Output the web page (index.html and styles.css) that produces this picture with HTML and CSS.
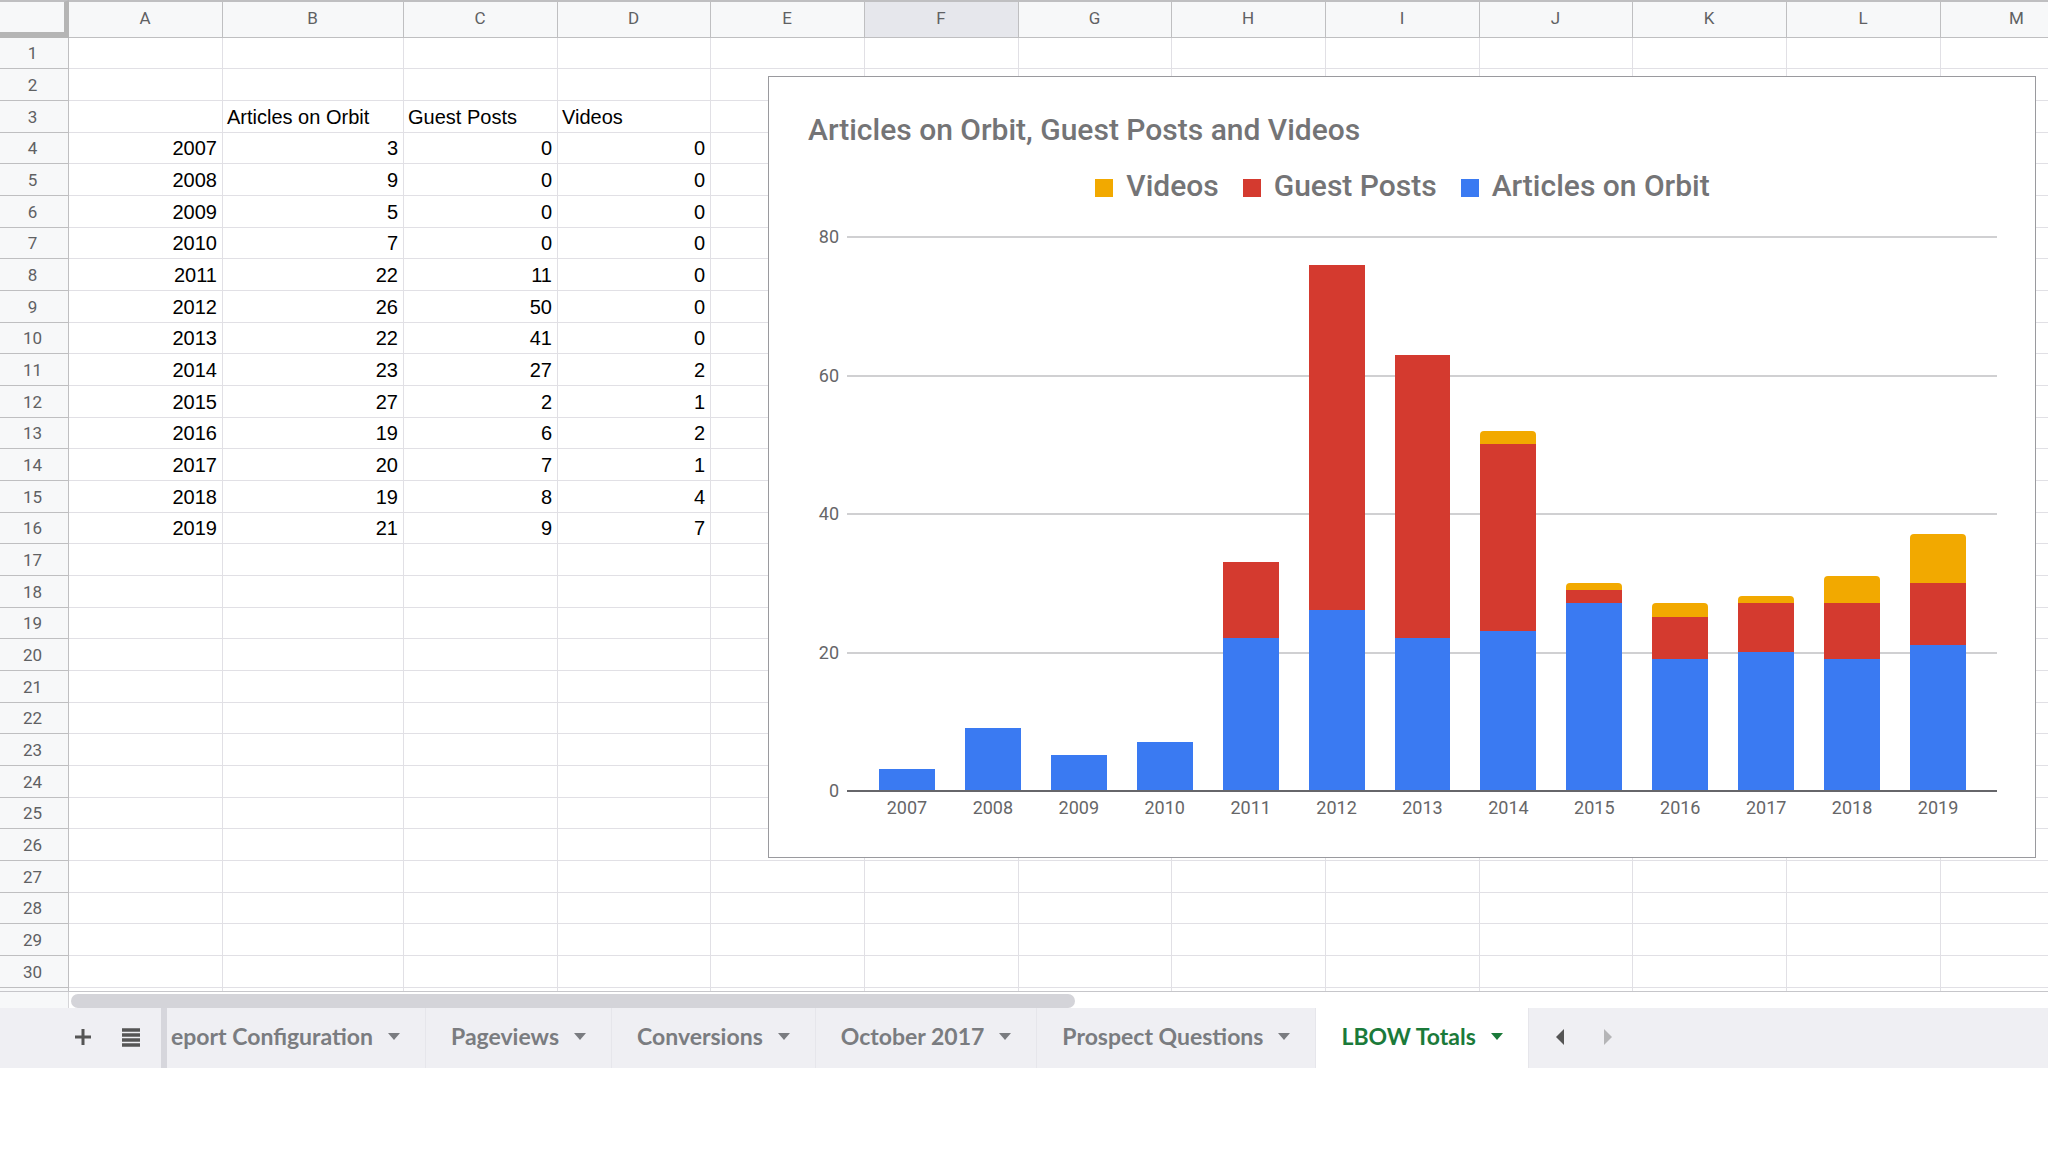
FILE: index.html
```
<!DOCTYPE html>
<html lang="en">
<head>
    <meta charset="UTF-8">
    <meta name="viewport" content="width=device-width, initial-scale=1.0">
    <title>LBOW Totals</title>
    <link rel="stylesheet" href="styles.css">
</head>
<body>
    <main class="sheet">
        <table class="grid">
            <colgroup id="cols"></colgroup>
            <thead><tr id="letters"></tr></thead>
            <tbody id="rows"></tbody>
        </table>
        <section class="chart">
            <h1 class="chart-title">Articles on Orbit, Guest Posts and Videos</h1>
            <ul class="legend">
                <li class="legend-item"><span class="swatch videos"></span>Videos</li>
                <li class="legend-item"><span class="swatch guest"></span>Guest Posts</li>
                <li class="legend-item"><span class="swatch articles"></span>Articles on Orbit</li>
            </ul>
            <div class="plot">
                <div class="axis">
                    <div class="tick">80</div>
                    <div class="tick">60</div>
                    <div class="tick">40</div>
                    <div class="tick">20</div>
                    <div class="tick zero">0</div>
                </div>
                <div class="bars" id="bars"></div>
            </div>
            <div class="years" id="years"></div>
        </section>
    </main>
    <div class="scroll-row">
        <div class="scroll-corner"></div>
        <div class="scroll-track"><div class="scroll-thumb"></div></div>
    </div>
    <footer class="bottom-bar">
        <div class="tools">
            <button class="icon-button" aria-label="Add sheet">
                <svg width="20" height="20" viewBox="0 0 20 20"><path d="M10 2v16M2 10h16" stroke="#555" stroke-width="3"/></svg>
            </button>
            <button class="icon-button" aria-label="All sheets">
                <svg width="20" height="20" viewBox="0 0 20 20"><path d="M1 3h18M1 8h18M1 13h18M1 18h18" stroke="#555" stroke-width="3.4"/></svg>
            </button>
        </div>
        <nav class="tabs">
            <button class="tab first"><span class="tab-name">eport Configuration</span><span class="caret"></span></button>
            <button class="tab"><span class="tab-name">Pageviews</span><span class="caret"></span></button>
            <button class="tab"><span class="tab-name">Conversions</span><span class="caret"></span></button>
            <button class="tab"><span class="tab-name">October 2017</span><span class="caret"></span></button>
            <button class="tab"><span class="tab-name">Prospect Questions</span><span class="caret"></span></button>
            <button class="tab active"><span class="tab-name">LBOW Totals</span><span class="caret"></span></button>
        </nav>
        <div class="pager">
            <button class="icon-button" aria-label="Scroll tabs left">
                <svg width="10" height="18" viewBox="0 0 10 18"><path d="M9 1v16L1 9z" fill="#555"/></svg>
            </button>
            <button class="icon-button" aria-label="Scroll tabs right">
                <svg width="10" height="18" viewBox="0 0 10 18"><path d="M1 1v16L9 9z" fill="#b5b5b7"/></svg>
            </button>
        </div>
    </footer>
    <script src="script.js"></script>
</body>
</html>
```
FILE: styles.css
```
* {
    box-sizing: border-box;
}

body {
    margin: 0;
    background-color: white;
    font-family: Roboto, Arial, sans-serif;
    overflow-x: hidden;
}

button {
    padding: 0;
    border: none;
    background: none;
    font: inherit;
    color: inherit;
    cursor: pointer;
}

/* cells */
.sheet {
    position: relative;
    overflow: hidden;
    border-bottom: 1px solid #c6c6ca;
}

.grid {
    table-layout: fixed;
    width: 0;
    border-collapse: separate;
    border-spacing: 0;
}

.head-col {
    width: 69px;
}

.col {
    width: 154px;
}

.col:nth-child(3n + 5) {
    width: 153px;
}

.col.wide {
    width: 181px;
}

.grid th,
.grid td {
    padding: 0 5px 0 4px;
    border-right: 1px solid #e1e0e5;
    border-bottom: 1px solid #e1e0e5;
    white-space: nowrap;
}

.grid th {
    border-color: #bfbfc1;
    background-color: #f7f8f9;
    color: #5f6163;
    font-size: 17px;
    font-weight: 400;
    line-height: 20px;
}

.grid thead th {
    height: 38px;
    padding-bottom: 3px;
    border-top: 2px solid #bfbfc1;
}

.grid tbody th {
    padding-right: 7px;
}

.grid thead th.selected {
    background-color: #e6e7ec;
}

.grid thead th.corner {
    border-right: 5px solid #b5b5b5;
    border-bottom: 6px solid #b5b5b5;
}

.grid tbody tr {
    height: 32px;
}

.grid tbody tr:nth-child(3n + 1) {
    height: 31px;
}

.grid tbody tr.last {
    height: 3px;
}

.grid tbody tr.last td,
.grid tbody tr.last th {
    border-bottom: none;
}

.grid td {
    font-family: "Liberation Sans", Arial, sans-serif;
    font-size: 20px;
    line-height: 24px;
    color: black;
    text-align: right;
}

.grid td.label {
    text-align: left;
}

/* chart */
.chart {
    position: absolute;
    left: 768px;
    top: 76px;
    width: 1268px;
    height: 782px;
    padding: 33px 38px 0 39px;
    border: 1px solid #9a9a9e;
    background-color: white;
    color: #666668;
}

.chart-title {
    margin: 0;
    color: #747476;
    font-size: 30px;
    font-weight: 500;
    line-height: 40px;
}

.legend {
    display: flex;
    justify-content: center;
    gap: 24px;
    margin: 16px 0 0;
    padding: 0;
    list-style: none;
    color: #747476;
    font-size: 30px;
    font-weight: 500;
    line-height: 40px;
}

.legend-item {
    display: flex;
    align-items: center;
    gap: 13px;
}

.swatch {
    width: 18px;
    height: 18px;
    margin-top: 3px;
}

.articles {
    background-color: #3a7af2;
}

.guest {
    background-color: #d43a2f;
}

.videos {
    background-color: #f2a900;
}

.plot {
    display: grid;
    height: 574px;
    margin-top: 21px;
}

.axis {
    display: flex;
    flex-direction: column;
    justify-content: space-between;
    grid-area: 1 / 1;
}

.tick {
    display: grid;
    grid-template-columns: 31px 1fr;
    gap: 8px;
    align-items: center;
    height: 20px;
    font-size: 18px;
    line-height: 20px;
    text-align: right;
}

.tick::after {
    content: "";
    height: 2px;
    background-color: #d0d0d2;
}

.tick.zero::after {
    background-color: #66666a;
}

.bars {
    display: flex;
    grid-area: 1 / 1;
    margin: 10px 0 11px;
    padding: 0 16px 0 56px;
}

.bar {
    display: flex;
    flex: 1;
    flex-direction: column;
    justify-content: flex-end;
    padding: 0 15px;
}

.bar .videos {
    border-radius: 4px 4px 0 0;
}

.years {
    display: flex;
    margin-top: -3px;
    padding: 0 16px 0 56px;
    font-size: 18px;
    line-height: 20px;
    text-align: center;
}

.year {
    flex: 1;
}

/* scrollbar */
.scroll-row {
    display: flex;
    height: 16px;
}

.scroll-corner {
    width: 69px;
    border-right: 1px solid #d5d5d8;
    background-color: #f7f8f9;
}

.scroll-track {
    flex: 1;
    padding: 2px 8px 0 2px;
}

.scroll-thumb {
    width: 51%;
    height: 14px;
    border-radius: 7px;
    background-color: #d4d4d9;
}

/* sheet tabs */
.bottom-bar {
    display: flex;
    height: 60px;
    background-color: #efeff3;
}

.tools {
    display: flex;
    align-items: center;
    gap: 28px;
    width: 161px;
    padding: 0 0 3px 73px;
}

.icon-button {
    display: flex;
}

.tabs {
    display: flex;
    border-left: 6px solid #d6d6dc;
}

.tab {
    display: flex;
    align-items: center;
    gap: 15px;
    padding: 0 25px 4px;
    border-right: 1px solid #e6e6eb;
    color: #7a7c80;
    font-family: "Google Sans", Lato, sans-serif;
    font-size: 23px;
    font-weight: 700;
    white-space: nowrap;
}

.tab.first {
    justify-content: flex-end;
    width: 259px;
    padding-left: 0;
}

.tab.active {
    background-color: white;
    color: #1b7a3a;
}

.caret {
    border: 6px solid transparent;
    border-top: 7px solid currentColor;
    border-bottom: none;
}

.pager {
    display: flex;
    align-items: center;
    gap: 38px;
    padding: 0 0 3px 26px;
}
```
FILE: script.js
```
const columns = 'ABCDEFGHIJKLM'.split('');
const totalRows = 30;

// year, articles, guest posts, videos
const data = [
    [2007, 3, 0, 0],
    [2008, 9, 0, 0],
    [2009, 5, 0, 0],
    [2010, 7, 0, 0],
    [2011, 22, 11, 0],
    [2012, 26, 50, 0],
    [2013, 22, 41, 0],
    [2014, 23, 27, 2],
    [2015, 27, 2, 1],
    [2016, 19, 6, 2],
    [2017, 20, 7, 1],
    [2018, 19, 8, 4],
    [2019, 21, 9, 7],
];
const labels = ['', 'Articles on Orbit', 'Guest Posts', 'Videos'];

document.getElementById('cols').innerHTML = '<col class="head-col">' +
    columns.map(c => `<col class="col${c === 'B' ? ' wide' : ''}">`).join('');

document.getElementById('letters').innerHTML = '<th class="corner"></th>' +
    columns.map(c => `<th scope="col"${c === 'F' ? ' class="selected"' : ''}>${c}</th>`).join('');

let rows = '';
for (let r = 1; r <= totalRows; r++) {
    rows += `<tr><th scope="row">${r}</th>`;
    columns.forEach((c, i) => {
        if (r === 3) {
            rows += `<td class="label">${labels[i] || ''}</td>`;
        } else {
            const line = data[r - 4];
            rows += `<td>${line && i < 4 ? line[i] : ''}</td>`;
        }
    });
    rows += '</tr>';
}
// start of row 31, cut off by the scrollbar
rows += '<tr class="last"><th></th>' + columns.map(() => '<td></td>').join('') + '</tr>';
document.getElementById('rows').innerHTML = rows;

// stacked bars, the axis goes up to 80
function part(name, value) {
    return value ? `<div class="${name}" style="height: ${value / 80 * 100}%"></div>` : '';
}

document.getElementById('bars').innerHTML = data.map(([year, articles, guest, videos]) =>
    `<div class="bar">${part('videos', videos)}${part('guest', guest)}${part('articles', articles)}</div>`
).join('');

document.getElementById('years').innerHTML = data.map(d => `<span class="year">${d[0]}</span>`).join('');
```
